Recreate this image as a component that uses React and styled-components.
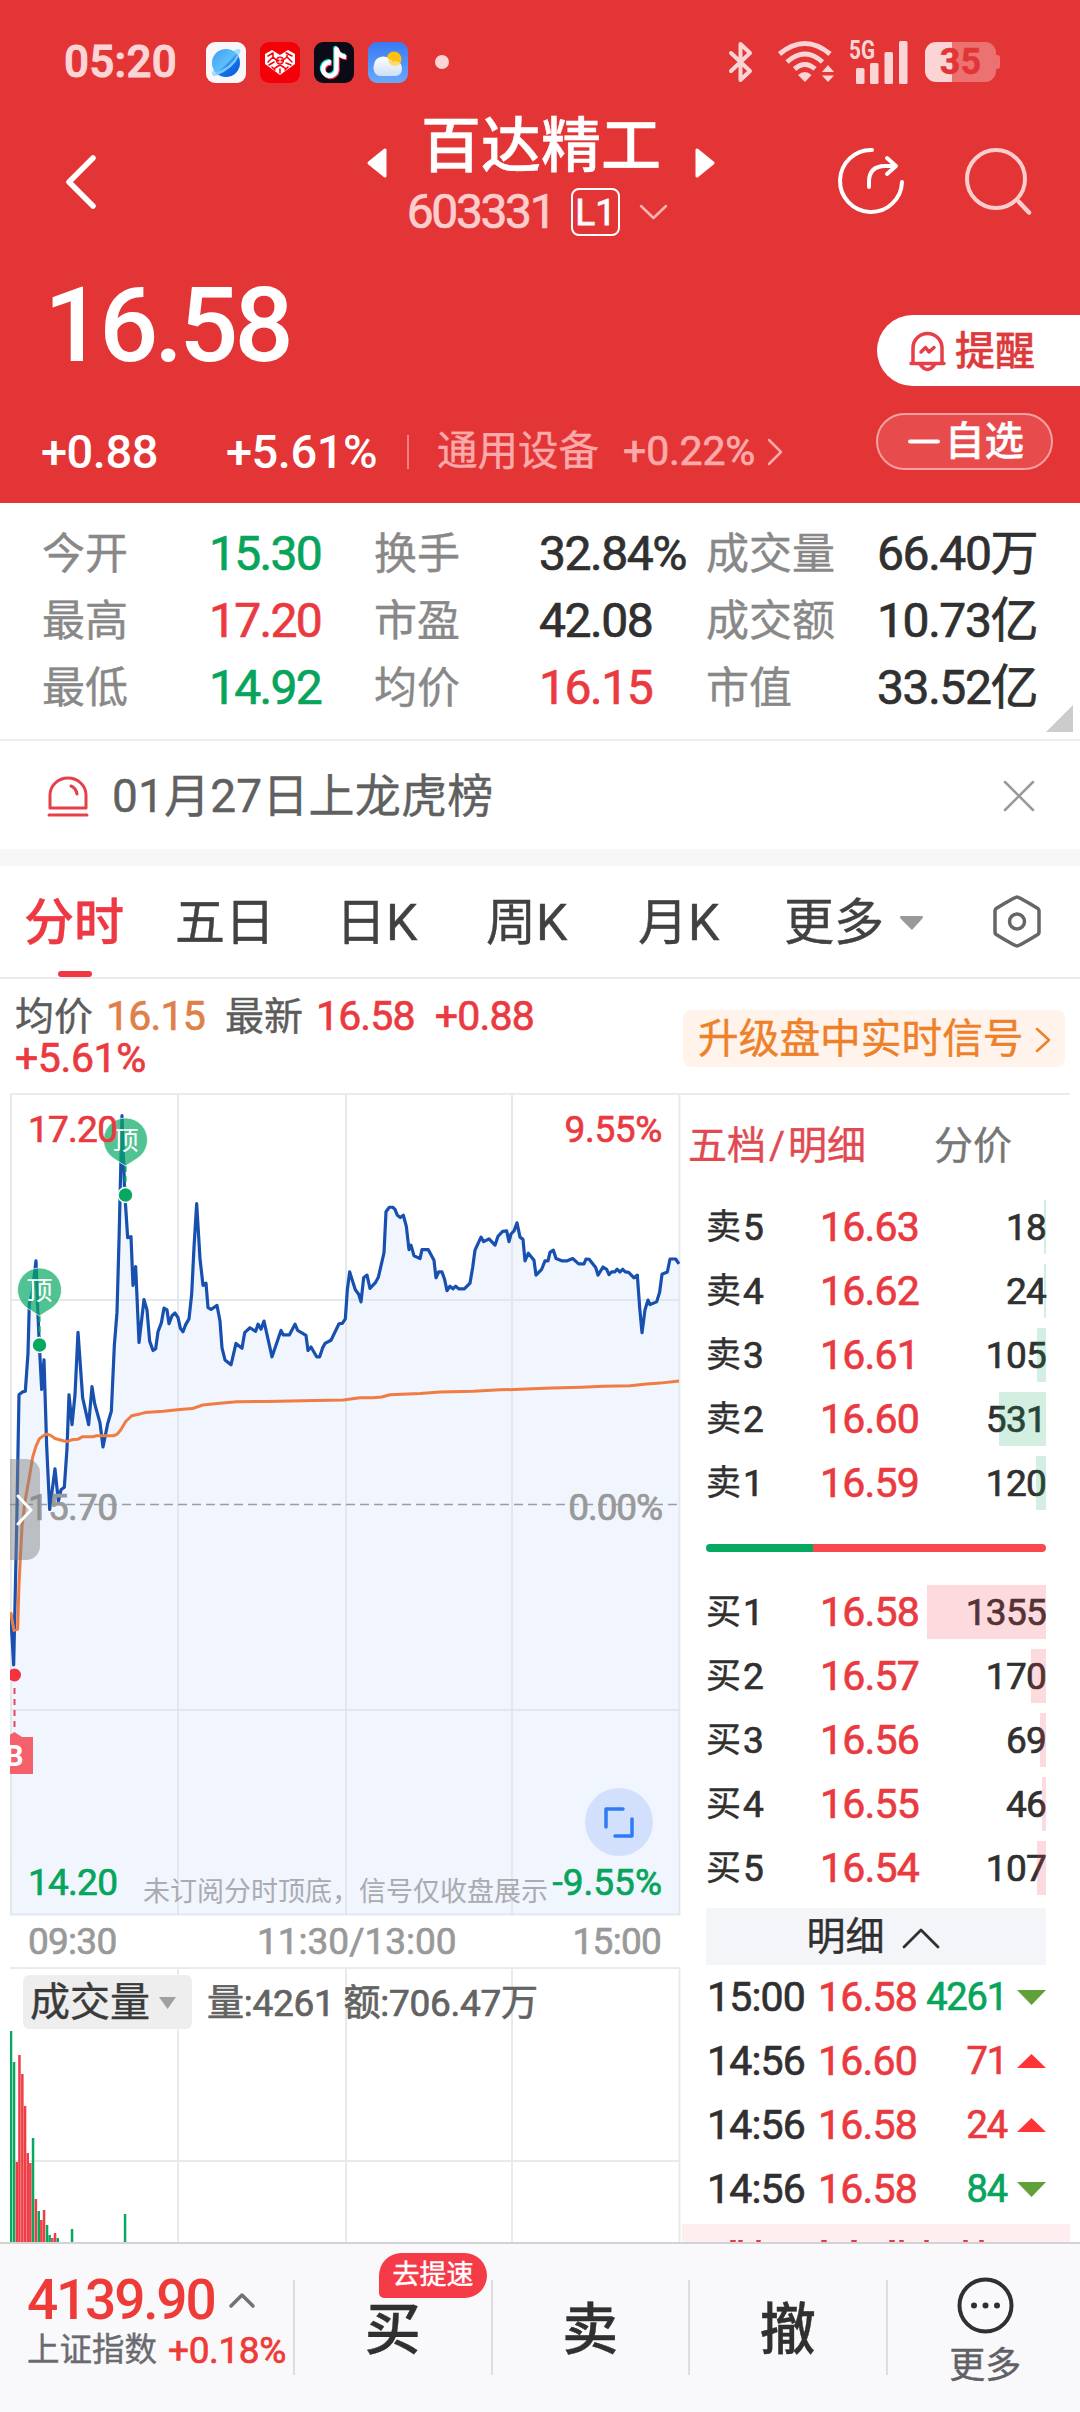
import React from 'react';
import styled, { createGlobalStyle } from 'styled-components';

const RED = '#ea3a3f';
const GREEN = '#07a45c';
const INK = '#303030';

const GlobalStyle = createGlobalStyle`
    * {
        box-sizing: border-box;
    }

    body {
        margin: 0;
        background: #fff;
    }
`;

const Screen = styled.div`
    display: flex;
    flex-direction: column;
    width: 1080px;
    height: 2412px;
    overflow: hidden;
    background: #fff;
    font-family: Roboto, 'Noto Sans CJK SC', sans-serif;
    line-height: 1;
    white-space: nowrap;
    color: ${INK};
    -webkit-text-stroke: 0.4px currentColor;
`;

const Num = styled.span`
    font-size: ${(p) => p.$size}px;
    font-weight: ${(p) => p.$weight || 400};
    color: ${(p) => p.$color || 'inherit'};
    letter-spacing: ${(p) => (p.$ls === undefined ? -0.02 : p.$ls)}em;
    -webkit-text-stroke: ${(p) => (p.$weight ? 0 : 0.7)}px currentColor;
`;

const Icon = styled.svg`
    display: block;
    flex: none;
    overflow: visible;
    fill: none;
    stroke-linecap: round;
    stroke-linejoin: round;
`;

/* ---------- header ---------- */

const Header = styled.header`
    flex: none;
    height: 503px;
    background: #e33536;
    color: #fff;
`;

const StatusBar = styled.div`
    display: flex;
    align-items: center;
    height: 104px;
    padding: 20px 80px 0 64px;
    color: #fbd5d5;
`;

const Clock = styled.span`
    width: 142px;
    font-size: 44px;
    font-weight: 500;
    letter-spacing: 0.3px;
    -webkit-text-stroke: 1px currentColor;
`;

const AppIcons = styled.div`
    display: flex;
    gap: 14px;
`;

const Dot = styled.i`
    width: 14px;
    height: 14px;
    margin-left: 27px;
    border-radius: 50%;
    background: #fbd5d5;
`;

const StatusIcons = styled.div`
    display: flex;
    align-items: center;
    margin-left: auto;
`;

const Battery = styled.div`
    position: relative;
    width: 71px;
    height: 40px;
    margin: 0 4px 0 17px;
    border-radius: 11px;
    background: linear-gradient(90deg, #fbd5d5 27px, #ec7272 27px);
    color: #e33536;
    font-size: 36px;
    font-weight: 700;
    line-height: 41px;
    text-align: center;

    &::after {
        content: '';
        position: absolute;
        right: -4px;
        top: 13px;
        width: 4px;
        height: 14px;
        border-radius: 0 3px 3px 0;
        background: #ec7272;
    }
`;

const TitleBar = styled.div`
    display: flex;
    height: 146px;
    padding: 0 48px 0 66px;
`;

const BackIcon = styled(Icon)`
    margin-top: 51px;
`;

const TitleBlock = styled.div`
    display: flex;
    flex-direction: column;
    align-items: center;
    width: 348px;
    margin-left: 270px;
`;

const TitleRow = styled.div`
    display: flex;
    align-items: center;
    justify-content: space-between;
    width: 100%;
    height: 78px;
`;

const StockName = styled.h1`
    margin: 8px 0 0;
    font-size: 60px;
    font-weight: 500;
    line-height: 78px;
`;

const TitleArrow = styled(Icon)`
    margin-top: 40px;
`;

const CodeRow = styled.div`
    display: flex;
    align-items: center;
    height: 60px;
    padding-right: 8px;
    color: #fccdcd;
`;

const LevelTag = styled.span`
    width: 49px;
    height: 48px;
    margin: 0 20px 0 17px;
    border: 2px solid #fff;
    border-radius: 8px;
    color: #fff;
    font-size: 37px;
    line-height: 45px;
    text-align: center;
    -webkit-text-stroke: 0.8px currentColor;
`;

const HeaderActions = styled.div`
    display: flex;
    gap: 62px;
    margin: 44px 0 0 auto;
`;

const PriceRow = styled.div`
    display: flex;
    justify-content: space-between;
    height: 140px;
    padding: 22px 0 0 44px;
`;

const LastPrice = styled(Num)`
    padding-top: 2px;
`;

const AlertButton = styled.div`
    display: flex;
    align-items: center;
    gap: 9px;
    width: 203px;
    height: 71px;
    margin-top: 43px;
    padding: 2px 0 0 32px;
    border-radius: 36px 0 0 36px;
    background: #fff;
    color: #dd3a3c;
    font-size: 40px;
    font-weight: 500;
`;

const ChangeRow = styled.div`
    display: flex;
    align-items: center;
    height: 121px;
    padding: 2px 27px 0 41px;
`;

const Divider = styled.i`
    width: 2px;
    height: 34px;
    margin: 0 28px 0 30px;
    background: #f07f7f;
`;

const Sector = styled.span`
    margin-right: 24px;
    color: #fba9a9;
    font-size: 40.5px;
`;

const WatchButton = styled.div`
    display: flex;
    align-items: center;
    justify-content: center;
    gap: 5px;
    width: 177px;
    height: 57px;
    margin: -21px 0 0 auto;
    padding: 1px 0 0 3px;
    border: 2px solid #f6a0a0;
    border-radius: 29px;
    background: #e84b4c;
    font-size: 39.5px;
    font-weight: 500;
`;

/* ---------- quote summary ---------- */

const Stats = styled.section`
    position: relative;
    flex: none;
    display: grid;
    grid-template-columns: 167px 165px 165px 167px 1fr auto;
    grid-auto-rows: 67px;
    align-items: center;
    height: 238px;
    padding: 17px 43px 0 42px;
    border-bottom: 2px solid #ececec;
`;

const StatLabel = styled.span`
    padding-top: 2px;
    color: #888;
    font-size: 43px;
`;

const Corner = styled.i`
    position: absolute;
    right: 7px;
    bottom: 7px;
    border-left: 27px solid transparent;
    border-bottom: 27px solid #ccc;
`;

const Notice = styled.section`
    flex: none;
    display: flex;
    align-items: center;
    height: 125px;
    padding: 2px 46px 0 48px;
    border-bottom: 17px solid #f7f7f7;
    color: #606060;
    font-size: 46px;
`;

const NoticeText = styled.span`
    margin: 0 auto 0 24px;
    letter-spacing: 0.2px;
`;

/* ---------- period tabs ---------- */

const Tabs = styled.nav`
    flex: none;
    display: grid;
    grid-template-columns: 151px 161px 150px 152px 146px 209px auto;
    align-items: center;
    justify-content: start;
    height: 113px;
    padding-left: 24px;
    border-bottom: 2px solid #ebebeb;
`;

const Tab = styled.span`
    position: relative;
    display: flex;
    align-items: center;
    gap: 16px;
    height: 111px;
    padding-top: 3px;
    color: ${(p) => (p.$active ? '#ee3843' : '#414141')};
    font-size: 50px;
    font-weight: ${(p) => (p.$active ? 500 : 400)};

    ${(p) => p.$active && `
        &::after {
            content: '';
            position: absolute;
            left: 34px;
            bottom: 0;
            width: 34px;
            height: 6px;
            border-radius: 3px;
            background: #ee3843;
        }
    `}
`;

const Legend = styled.div`
    flex: none;
    display: flex;
    justify-content: space-between;
    height: 116px;
    margin: 0 10px;
    padding: 17px 5px 0;
    border-bottom: 2px solid #ebebeb;
`;

const LegendText = styled.p`
    width: 560px;
    margin: 0;
    color: #5c5c5c;
    font-size: 39px;
    line-height: 41px;
    white-space: normal;
`;

const LegendNum = styled(Num)`
    margin: 0 20px 0 ${(p) => p.$ml || 0}px;
`;

const Promo = styled.div`
    display: flex;
    align-items: center;
    gap: 12px;
    width: 382px;
    height: 57px;
    margin-top: 14px;
    padding: 2px 0 0 15px;
    border-radius: 8px;
    background: #fff3eb;
    color: #ee8029;
    font-size: 40.7px;
`;

/* ---------- chart ---------- */

const Body = styled.main`
    display: flex;
    flex: none;
    height: 1147px;
    padding: 0 10px;
    overflow: hidden;
`;

const ChartColumn = styled.section`
    flex: none;
    width: 672px;
`;

const PriceChart = styled.div`
    position: relative;
    height: 821px;
    overflow: hidden;
`;

const ChartSvg = styled.svg`
    display: block;
    -webkit-text-stroke: 0;
`;

const ChartLabel = styled(Num)`
    position: absolute;
    top: ${(p) => p.$top}px;
    ${(p) => (p.$right ? 'right: 20px' : 'left: 18px')};
`;

const ChartHint = styled.span`
    position: absolute;
    left: 133px;
    top: 784px;
    color: #aaabb0;
    font-size: 27px;
    -webkit-text-stroke: 0;
`;

const Handle = styled.div`
    position: absolute;
    left: 0;
    top: 364px;
    display: flex;
    align-items: center;
    width: 30px;
    height: 101px;
    padding-left: 7px;
    border-radius: 0 14px 14px 0;
    background: rgba(130, 130, 130, 0.48);
`;

const FullscreenButton = styled.div`
    position: absolute;
    right: 29px;
    top: 693px;
    display: flex;
    align-items: center;
    justify-content: center;
    width: 68px;
    height: 68px;
    border-radius: 50%;
    background: #d2e0fe;
`;

const TimeAxis = styled.div`
    display: grid;
    grid-template-columns: 229px 1fr auto;
    align-items: center;
    height: 51px;
    padding: 0 21px 1px 18px;
    color: #999;
`;

const VolumeChart = styled.div`
    position: relative;
    height: 275px;
`;

const VolumeHead = styled.div`
    position: absolute;
    left: 13px;
    top: 8px;
    display: flex;
    align-items: center;
    color: #636363;
`;

const VolumePicker = styled.span`
    display: flex;
    align-items: center;
    gap: 9px;
    width: 169px;
    height: 54px;
    margin-right: 15px;
    padding: 2px 0 0 7px;
    border-radius: 6px;
    background: #eee;
    color: #3a3a3a;
    font-size: 40px;
`;

const VolumeText = styled(Num)`
    padding-top: 3px;
`;

/* ---------- order book ---------- */

const Book = styled.aside`
    flex: 1;
    display: flex;
    flex-direction: column;
    padding-right: 24px;
`;

const BookTabs = styled.div`
    flex: none;
    display: flex;
    justify-content: space-between;
    height: 100px;
    padding: 0 34px 0 6px;
    color: #777;
    font-size: 39px;
    line-height: 103px;
`;

const BookTabActive = styled.span`
    color: #e04a50;
`;

const Slash = styled.i`
    margin: 0 3px;
    font-style: normal;
`;

const Level = styled.div`
    position: relative;
    flex: none;
    display: flex;
    align-items: center;
    height: 64px;
    margin: 0 0 0 24px;
    padding-top: 1px;
    font-size: 35px;
`;

const LevelNum = styled(Num)`
    width: 55px;
    padding-left: 2px;
`;

const LevelPrice = styled(Num)`
    margin-left: 24px;
`;

const LevelQty = styled(Num)`
    margin-left: auto;
`;

const DepthBar = styled.i`
    position: absolute;
    right: 0;
    top: 5px;
    height: 54px;
    background: ${(p) => (p.$sell ? 'rgba(7, 164, 92, 0.18)' : 'rgba(240, 60, 75, 0.19)')};
`;

const Ratio = styled.div`
    flex: none;
    height: 8px;
    margin: 29px 0 28px 24px;
    border-radius: 4px;
    background: linear-gradient(90deg, #07a960 107px, #f9494d 107px);
`;

const DetailHead = styled.div`
    flex: none;
    display: flex;
    align-items: center;
    justify-content: center;
    gap: 18px;
    height: 57px;
    margin: 8px 0 0 24px;
    padding: 2px 7px 0 0;
    background: #f4f5f9;
    font-size: 39px;
`;

const Trade = styled.div`
    flex: none;
    display: grid;
    grid-template-columns: 111px 99px 1fr 29px;
    align-items: center;
    height: 64px;
    padding-left: 25px;
`;

const TradeQty = styled(Num)`
    margin-right: 10px;
    text-align: right;
`;

const Strip = styled.div`
    flex: none;
    height: 60px;
    margin: 3px -24px 0 0;
    background: #feeeef;
`;

/* ---------- bottom bar ---------- */

const BottomBar = styled.footer`
    flex: none;
    display: flex;
    height: 170px;
    border-top: 2px solid #d3d3d6;
    background: #f9f9fb;
`;

const Index = styled.div`
    flex: none;
    width: 293px;
    padding: 28px 0 0 27px;
`;

const IndexValue = styled.div`
    display: flex;
    align-items: center;
    gap: 15px;
    height: 56px;
    color: #ee3b38;
`;

const IndexName = styled.div`
    display: flex;
    align-items: center;
    gap: 11px;
    height: 44px;
    color: #6a6b70;
    font-size: 32.5px;
`;

const Action = styled.div`
    position: relative;
    flex: none;
    display: flex;
    flex-direction: column;
    align-items: center;
    justify-content: center;
    gap: ${(p) => (p.$more ? 14 : 0)}px;
    width: 197.5px;
    height: 95px;
    margin-top: 36px;
    padding-top: ${(p) => (p.$more ? 5 : 4)}px;
    border-left: 2px solid #dedee2;
    font-size: 56px;
    font-weight: 500;
`;

const Badge = styled.span`
    position: absolute;
    left: 84px;
    top: -27px;
    width: 108px;
    height: 45px;
    border-radius: 23px 23px 23px 5px;
    background: #f53a48;
    color: #fff;
    font-size: 27px;
    font-weight: 400;
    line-height: 45px;
    text-align: center;
`;

const MoreLabel = styled.span`
    color: #606065;
    font-size: 36px;
    font-weight: 400;
`;

const stats = [
    ['今开', '15.30', GREEN, '换手', '32.84%', INK, '成交量', '66.40万'],
    ['最高', '17.20', RED, '市盈', '42.08', INK, '成交额', '10.73亿'],
    ['最低', '14.92', GREEN, '均价', '16.15', RED, '市值', '33.52亿'],
];

const sells = [
    [5, '16.63', 18, 2],
    [4, '16.62', 24, 2],
    [3, '16.61', 105, 9],
    [2, '16.60', 531, 47],
    [1, '16.59', 120, 10],
];

const buys = [
    [1, '16.58', 1355, 119],
    [2, '16.57', 170, 15],
    [3, '16.56', 69, 6],
    [4, '16.55', 46, 4],
    [5, '16.54', 107, 9],
];

const trades = [
    ['15:00', '16.58', 4261, false],
    ['14:56', '16.60', 71, true],
    ['14:56', '16.58', 24, true],
    ['14:56', '16.58', 84, false],
];

// x, height, rising
const volumes = [
    [1, 211, 0], [4, 180, 0], [6.8, 80, 1], [9.4, 187, 1], [12.3, 168, 1], [15, 136, 1], [17.7, 89, 1],
    [20.3, 79, 1], [23, 104, 0], [25.8, 43, 1], [28.7, 31, 0], [31.3, 22, 1], [34, 32, 1], [37, 17, 0],
    [39.6, 7, 0], [42.3, 4, 1], [45, 9, 1], [47.7, 4, 0], [62, 13, 0], [115, 28, 0],
];

const priceLine = `32,1195 41,1310 50,1000 57,705 67,699 76,697 84,612 88,500 96,480 108,405 113,510 118,593 125,693 132,627
140,820 149,962 165,871 175,944 183,918 193,912 201,825 207,705 216,772 225,705 234,565 248,712 266,772 276,687 284,725
300,768 309,822 323,770 334,742 343,595 351,520 357,360 366,80 374,250 383,353 393,351 399,460 407,418 417,588 432,492
441,515 449,585 459,606 467,602 474,564 484,544 492,511 501,515 507,546 516,528 525,522 534,532 541,556 549,564 557,548
567,535 575,480 582,375 590,277 600,400 609,460 618,455 624,510 633,514 651,505 660,540 666,600 675,627 693,638 708,590
726,601 734,566 750,555 767,563 774,547 783,558 792,540 816,620 843,561 850,571 868,571 885,547 893,561 918,572 924,606
933,598 950,620 959,620 968,600 975,590 993,583 1017,546 1027,545 1036,535 1042,470 1049,430 1066,470 1076,480 1083,497
1091,443 1101,437 1110,467 1126,454 1135,442 1152,387 1158,295 1168,285 1178,285 1185,290 1192,303 1201,308 1210,303
1219,328 1227,380 1233,370 1242,394 1260,400 1266,380 1285,380 1302,404 1308,443 1316,430 1326,430 1334,447 1341,472
1350,462 1359,468 1367,462 1377,468 1393,468 1410,455 1418,420 1425,381 1443,352 1451,362 1467,356 1485,370 1494,350
1508,339 1520,338 1527,362 1533,345 1542,338 1551,320 1560,352 1569,357 1575,405 1585,388 1602,404 1608,437 1625,424
1635,405 1644,405 1650,386 1660,381 1668,400 1685,405 1702,405 1718,400 1736,412 1752,412 1758,401 1768,402 1787,420
1794,437 1809,419 1820,424 1827,436 1835,430 1844,430 1851,424 1860,430 1868,424 1876,430 1886,431 1902,443 1912,437
1919,510 1926,566 1935,515 1944,493 1950,503 1970,497 1979,475 1986,435 2002,430 2010,401 2027,401 2037,412`;

const avgLine = `32,1192 42,1233 53,1230 57,1130 66,1000 76,940 88,890 98,845 108,820 118,804 130,797 140,793 152,796 165,803
190,808 201,810 215,806 233,805 248,799 278,799 290,797 340,797 352,793 362,784 377,765 395,752 420,748 435,745 490,742
540,738 577,736 608,728 660,724 710,721 800,720 945,718 1030,717 1080,712 1120,712 1145,710 1170,705 1260,702 1320,699
1420,697 1500,694 1560,693 1655,690 1745,688 1810,686 1890,685 1940,681 1980,679 2037,674`;

const AppIconSet = () => (
    <AppIcons>
        <Icon width="40" height="41" viewBox="0 0 40 41">
            <defs>
                <linearGradient id="planet" x1="0" y1="0" x2="1" y2="1">
                    <stop offset="0" stopColor="#3f9bf5" />
                    <stop offset=".5" stopColor="#5cc0fb" />
                    <stop offset=".6" stopColor="#1673ea" />
                    <stop offset="1" stopColor="#0a55d8" />
                </linearGradient>
            </defs>
            <rect width="40" height="41" rx="9" fill="#f8f8fa" />
            <path d="M29 8Q36 5 34 11L30 16L12 33Q5 36 6 30L8 27Z" fill="#a5dcfd" />
            <circle cx="20" cy="21" r="14" fill="url(#planet)" />
            <path d="M33 14Q27 27 11 33L9 31Q24 26 32 12Z" fill="#7cc9fc" />
        </Icon>
        <Icon width="40" height="41" viewBox="0 0 40 41">
            <rect width="40" height="41" rx="9" fill="#f40008" />
            <path d="M5 15V22L20 33L35 22V12L28 8L20 13L12 8L5 12Z" fill="#fff" />
            <path d="M8 14L13 11M8 20L13 15L18 20M9 23L14 20M26 11L32 14M22 19L27 15L32 20M26 21L31 23M15 26L20 23L25 26M20 27V31M12 25L15 28M28 25L25 28M13 11V15M27 11V15" stroke="#f40008" strokeWidth="1.5" />
            <circle cx="20" cy="18.500" r="4" fill="#f40008" />
            <path d="M18 17H22M18 20H22M20 16V21" stroke="#fff" strokeWidth="1" />
        </Icon>
        <Icon width="40" height="41" viewBox="0 0 40 41">
            <rect width="40" height="41" rx="9" fill="#0b0b17" />
            <g strokeWidth="4.500" strokeLinecap="butt">
                <path d="M16 19.500A6.800 6.800 0 1 0 21.500 27V6Q23 13 31 14" stroke="#25e8e2" />
                <path d="M18 21.500A6.800 6.800 0 1 0 23.500 29V8Q25 15 33 16" stroke="#f8305a" />
                <path d="M17 20.500A6.800 6.800 0 1 0 22.500 28V7Q24 14 32 15" stroke="#fff" />
            </g>
        </Icon>
        <Icon width="40" height="41" viewBox="0 0 40 41">
            <defs>
                <linearGradient id="sky" x1="0" y1="0" x2="0" y2="1">
                    <stop offset="0" stopColor="#3a7af2" />
                    <stop offset="1" stopColor="#69a9fa" />
                </linearGradient>
                <linearGradient id="cloud" x1="0" y1="0" x2="0" y2="1">
                    <stop offset="0" stopColor="#fff" />
                    <stop offset="1" stopColor="#cfdef5" />
                </linearGradient>
            </defs>
            <rect width="40" height="41" rx="9" fill="url(#sky)" />
            <circle cx="26" cy="17" r="7.500" fill="#fdc010" />
            <path d="M12 34A7 8 0 0 1 6 23A9 9 0 0 1 21 17Q24 19 25 20Q33 18 34 26Q34 34 27 34Z" fill="url(#cloud)" />
            <path d="M20 17Q21 25 28 24Q33 23 32 21Q29 19 25 20Q23 17 20 17Z" fill="#fbdc74" />
        </Icon>
    </AppIcons>
);

const Status = () => (
    <StatusBar>
        <Clock>05:20</Clock>
        <AppIconSet />
        <Dot />
        <StatusIcons>
            <Icon width="23" height="42" viewBox="0 0 23 42" stroke="#fbd5d5" strokeWidth="4">
                <path d="M2 12L21 30L11.500 39V3L21 12L2 30" />
            </Icon>
            <Icon width="57" height="42" viewBox="0 0 57 42" stroke="#fbd5d5" strokeWidth="5" style={{ marginLeft: 25 }}>
                <path d="M2.500 13Q28 -8 53 13M10 21Q28 5 45.500 21M17.500 28Q28 19 38 28" strokeLinecap="butt" />
                <path d="M21 34Q28 28 34.500 34L28 41Z" fill="#fbd5d5" stroke="none" />
                <path d="M51 24L57 31H45ZM51 41L57 34.500H45Z" fill="#fbd5d5" stroke="none" />
            </Icon>
            <Icon width="58" height="43" viewBox="0 0 58 43" style={{ marginLeft: 16 }}>
                <text x="-1" y="18" fill="#fbd5d5" fontSize="25" fontWeight="700" textLength="26" lengthAdjust="spacingAndGlyphs">5G</text>
                <rect x="6" y="27" width="8.500" height="16" rx="1.500" fill="#fbd5d5" />
                <rect x="20" y="22" width="8.500" height="21" rx="1.500" fill="#fbd5d5" />
                <rect x="34.500" y="11" width="8.500" height="32" rx="1.500" fill="#fbd5d5" />
                <rect x="49" y="0" width="8.500" height="43" rx="1.500" fill="#fbd5d5" />
            </Icon>
            <Battery>35</Battery>
        </StatusIcons>
    </StatusBar>
);

const Title = () => (
    <TitleBar>
        <BackIcon width="31" height="54" viewBox="0 0 31 54" stroke="#fff" strokeWidth="5.500">
            <path d="M27 3L3 27L27 51" />
        </BackIcon>
        <TitleBlock>
            <TitleRow>
                <TitleArrow width="20" height="30" viewBox="0 0 20 30" stroke="#fff" strokeWidth="3">
                    <path d="M18 2V28L2 15Z" fill="#fff" />
                </TitleArrow>
                <StockName>百达精工</StockName>
                <TitleArrow width="20" height="30" viewBox="0 0 20 30" stroke="#fff" strokeWidth="3">
                    <path d="M2 2V28L18 15Z" fill="#fff" />
                </TitleArrow>
            </TitleRow>
            <CodeRow>
                <Num $size={48} $ls={-0.05}>603331</Num>
                <LevelTag>L1</LevelTag>
                <Icon width="27" height="14" viewBox="0 0 27 14" stroke="#f9b4b4" strokeWidth="2.500">
                    <path d="M1 1L13.500 13L26 1" />
                </Icon>
            </CodeRow>
        </TitleBlock>
        <HeaderActions>
            <Icon width="66" height="66" viewBox="0 0 66 66" stroke="#fff" strokeWidth="4">
                <path d="M34 2A31 31 0 1 0 64 34" />
                <path d="M31 39V34Q31 18 47 18H57M49 10L58 18L49 26" />
            </Icon>
            <Icon width="66" height="67" viewBox="0 0 66 67" stroke="#fccdcd" strokeWidth="4">
                <circle cx="30" cy="31" r="29" />
                <path d="M53 54L63 64.500" strokeWidth="4.500" />
            </Icon>
        </HeaderActions>
    </TitleBar>
);

const Price = () => (
    <>
        <PriceRow>
            <LastPrice $size={104} $weight={500} $ls={-0.038}>16.58</LastPrice>
            <AlertButton>
                <Icon width="37" height="39" viewBox="0 0 37 39" stroke="#e5404a" strokeWidth="3.500">
                    <path d="M4 30V16A14.500 14.500 0 0 1 33 16V30M2 31.500H35M11 32Q18.500 43 26 32" />
                    <path d="M12 20L16.500 15.500L20 20L25 15.500" />
                </Icon>
                提醒
            </AlertButton>
        </PriceRow>
        <ChangeRow>
            <Num $size={47} $weight={500} $ls={-0.01} style={{ width: 185 }}>+0.88</Num>
            <Num $size={47} $weight={500} $ls={-0.01}>+5.61%</Num>
            <Divider />
            <Sector>通用设备</Sector>
            <Num $size={41} $ls={-0.005} $color="#fba9a9">+0.22%</Num>
            <Icon width="14" height="26" viewBox="0 0 14 26" stroke="#fba9a9" strokeWidth="2.500" style={{ marginLeft: 13 }}>
                <path d="M1 1L13 13L1 25" />
            </Icon>
            <WatchButton>
                <Icon width="32" height="5" viewBox="0 0 32 5" stroke="#fff" strokeWidth="4">
                    <path d="M2 2.500H30" />
                </Icon>
                自选
            </WatchButton>
        </ChangeRow>
    </>
);

const Summary = () => (
    <Stats>
        {stats.map(([l1, v1, c1, l2, v2, c2, l3, v3]) => (
            <React.Fragment key={l1}>
                <StatLabel>{l1}</StatLabel>
                <Num $size={48} $color={c1} $ls={-0.035}>{v1}</Num>
                <StatLabel>{l2}</StatLabel>
                <Num $size={48} $color={c2} $ls={-0.03}>{v2}</Num>
                <StatLabel>{l3}</StatLabel>
                <Num $size={48} $ls={-0.03}>{v3}</Num>
            </React.Fragment>
        ))}
        <Corner />
    </Stats>
);

const Pin = ({ x, y }) => (
    <g>
        <path d={`M${x} ${y + 26}V${y + 50}`} stroke={GREEN} strokeWidth="2" strokeDasharray="6 4" />
        <path
            d={`M${x} ${y + 26}L${x - 11} ${y + 19}A22 22 0 1 1 ${x + 11} ${y + 19}Z`}
            fill="rgba(7, 170, 100, 0.7)"
            stroke="#fff"
            strokeOpacity=".7"
        />
        <text x={x} y={y + 10} fill="#fff" fontSize="26" textAnchor="middle">顶</text>
        <circle cx={x} cy={y + 55} r="7.500" fill="#07a960" stroke="#fff" strokeWidth="1.500" />
    </g>
);

const Intraday = () => (
    <PriceChart>
        <ChartSvg width="672" height="821">
            <svg width="670" height="819" viewBox="30 33.6 2010 1834.6" preserveAspectRatio="none">
                <polygon points={`30,1870 ${priceLine} 2040,1870`} fill="#f0f5fe" />
            </svg>
            <g stroke="#dfe3ea" strokeOpacity=".8" strokeWidth="2">
                <path d="M1 0V820M168 0V820M336 0V820M502 0V820M669.500 0V820" />
                <path d="M0 205H670M0 615H670M0 819.500H670" />
            </g>
            <path d="M0 409.500H670" stroke="#9b9da3" strokeWidth="1.500" strokeDasharray="9 5" />
            <svg width="670" height="819" viewBox="30 33.6 2010 1834.6" preserveAspectRatio="none" fill="none" strokeLinejoin="round">
                <polyline points={priceLine} stroke="#1850b0" strokeWidth="3.200" vectorEffect="non-scaling-stroke" />
                <polyline points={avgLine} stroke="#f07c42" strokeWidth="3" vectorEffect="non-scaling-stroke" />
            </svg>
            <Pin x={29.5} y={195} />
            <Pin x={115.5} y={45} />
            <circle cx="4.500" cy="580" r="6.500" fill="#f5333f" />
            <path d="M4.500 593V637" stroke="#e8465a" strokeWidth="2" strokeDasharray="6 5" />
            <path d="M-4 642L4.500 637L12 642H23V679H-4Z" fill="#f4606c" />
            <text x="-5" y="671" fill="#fff" fontSize="29" fontWeight="700">B</text>
        </ChartSvg>
        <ChartLabel $size={37} $top={16} $color={RED}>17.20</ChartLabel>
        <ChartLabel $size={37} $top={16} $color={RED} $ls={-0.01} $right>9.55%</ChartLabel>
        <ChartLabel $size={37} $top={394} $color="#999">15.70</ChartLabel>
        <ChartLabel $size={37} $top={394} $color="#999" $ls={-0.03} $right>0.00%</ChartLabel>
        <ChartLabel $size={37} $top={769} $color={GREEN}>14.20</ChartLabel>
        <ChartLabel $size={37} $top={769} $color={GREEN} $ls={0} $right>-9.55%</ChartLabel>
        <ChartHint>未订阅分时顶底，信号仅收盘展示</ChartHint>
        <Handle>
            <Icon width="16" height="30" viewBox="0 0 16 30" stroke="#fff" strokeWidth="3">
                <path d="M1 1L14 15L1 29" />
            </Icon>
        </Handle>
        <FullscreenButton>
            <Icon width="30" height="31" viewBox="0 0 30 31" stroke="#2f7bf2" strokeWidth="3.500">
                <path d="M19 2H2V20M28 12V29H11" />
            </Icon>
        </FullscreenButton>
    </PriceChart>
);

const Volume = () => (
    <VolumeChart>
        <ChartSvg width="672" height="275">
            <g stroke="#eaeaea" strokeWidth="2">
                <path d="M0 1H670M0 194H670" />
                <path d="M168 2V276M336 2V276M502 2V276M669.500 2V276" />
            </g>
            {volumes.map(([x, h, up]) => (
                <rect key={x} x={x - 1.2} y={275 - h} width="2.500" height={h} fill={up ? '#ee3d45' : '#07a960'} />
            ))}
        </ChartSvg>
        <VolumeHead>
            <VolumePicker>
                成交量
                <Icon width="17" height="12" viewBox="0 0 17 12">
                    <path d="M0 0H17L8.500 12Z" fill="#a0a0a0" />
                </Icon>
            </VolumePicker>
            <VolumeText $size={37} $ls={-0.007}>量:4261 额:706.47万</VolumeText>
        </VolumeHead>
    </VolumeChart>
);

const LevelRow = ({ side, data: [n, price, qty, bar] }) => (
    <Level>
        {side}
        <LevelNum $size={37}>{n}</LevelNum>
        <LevelPrice $size={41} $color={RED}>{price}</LevelPrice>
        <LevelQty $size={37}>{qty}</LevelQty>
        <DepthBar $sell={side === '卖'} style={{ width: bar }} />
    </Level>
);

const OrderBook = () => (
    <Book>
        <BookTabs>
            <BookTabActive>五档<Slash>/</Slash>明细</BookTabActive>
            <span>分价</span>
        </BookTabs>
        {sells.map((s) => <LevelRow key={s[0]} side="卖" data={s} />)}
        <Ratio />
        {buys.map((b) => <LevelRow key={b[0]} side="买" data={b} />)}
        <DetailHead>
            明细
            <Icon width="36" height="20" viewBox="0 0 36 20" stroke={INK} strokeWidth="2.800">
                <path d="M1 19L18 2L35 19" />
            </Icon>
        </DetailHead>
        {trades.map(([time, price, qty, up], i) => (
            <Trade key={i}>
                <Num $size={41}>{time}</Num>
                <Num $size={41} $color={RED}>{price}</Num>
                <TradeQty $size={38} $ls={-0.03} $color={up ? RED : GREEN}>{qty}</TradeQty>
                <Icon width="29" height="15" viewBox="0 0 29 15">
                    {up ? <path d="M14.500 0L29 14H0Z" fill="#ff3535" /> : <path d="M0 0H29L14.500 15Z" fill="#60a03b" />}
                </Icon>
            </Trade>
        ))}
        <Strip>
            <Icon width="388" height="18" viewBox="0 0 388 18" stroke="#d9404c" strokeWidth="2" strokeLinecap="butt">
                <path d="M49 17H53M57 17H60M75 17H78M140 17H144M170 17H174M208 17H212M218 17H221M243 17H246M282 17H285M298 17H301" />
            </Icon>
        </Strip>
    </Book>
);

const Footer = () => (
    <BottomBar>
        <Index>
            <IndexValue>
                <Num $size={55} $weight={500} $ls={-0.04}>4139.90</Num>
                <Icon width="26" height="14" viewBox="0 0 26 14" stroke="#707075" strokeWidth="3.500">
                    <path d="M2 13L13 2L24 13" />
                </Icon>
            </IndexValue>
            <IndexName>
                上证指数
                <Num $size={37} $ls={-0.01} $color="#ee3b38">+0.18%</Num>
            </IndexName>
        </Index>
        <Action>
            买
            <Badge>去提速</Badge>
        </Action>
        <Action>卖</Action>
        <Action>撤</Action>
        <Action $more>
            <Icon width="57" height="57" viewBox="0 0 57 57" stroke={INK} strokeWidth="4">
                <circle cx="28.500" cy="28.500" r="26" />
                <g fill={INK} stroke="none">
                    <circle cx="17" cy="28.500" r="3" />
                    <circle cx="28.500" cy="28.500" r="3" />
                    <circle cx="40" cy="28.500" r="3" />
                </g>
            </Icon>
            <MoreLabel>更多</MoreLabel>
        </Action>
    </BottomBar>
);

const App = () => {
    return (
        <Screen>
            <GlobalStyle />
            <Header>
                <Status />
                <Title />
                <Price />
            </Header>

            <Summary />

            <Notice>
                <Icon width="40" height="41" viewBox="0 0 40 41" stroke="#e5404a" strokeWidth="3">
                    <path d="M2 32V19A18 17 0 0 1 38 19V32ZM1 39H39M23 10Q28 12 29 18" />
                </Icon>
                <NoticeText>01月27日上龙虎榜</NoticeText>
                <Icon width="30" height="30" viewBox="0 0 30 30" stroke="#999" strokeWidth="2.500">
                    <path d="M1 1L29 29M29 1L1 29" />
                </Icon>
            </Notice>

            <Tabs>
                <Tab $active>分时</Tab>
                <Tab>五日</Tab>
                <Tab>日K</Tab>
                <Tab>周K</Tab>
                <Tab>月K</Tab>
                <Tab>
                    更多
                    <Icon width="23" height="14" viewBox="0 0 23 14">
                        <path d="M1 0H22Q24 1 22 3L12 14L1 3Q-1 1 1 0Z" fill="#999" />
                    </Icon>
                </Tab>
                <Icon width="48" height="53" viewBox="0 0 48 53" stroke="#666" strokeWidth="3.500">
                    <path d="M24 2Q26 2 44 13Q46 14 46 16V37Q46 39 44 40Q26 51 24 51Q22 51 4 40Q2 39 2 37V16Q2 14 4 13Q22 2 24 2Z" />
                    <circle cx="24" cy="26.500" r="7.500" />
                </Icon>
            </Tabs>

            <Legend>
                <LegendText>
                    均价
                    <LegendNum $size={41} $color="#df8048" $ml={13}>16.15</LegendNum>
                    最新
                    <LegendNum $size={41} $color={RED} $ml={13}>16.58</LegendNum>
                    <Num $size={41} $color={RED}>+0.88</Num>
                    <br />
                    <Num $size={41} $ls={-0.01} $color={RED}>+5.61%</Num>
                </LegendText>
                <Promo>
                    升级盘中实时信号
                    <Icon width="14" height="24" viewBox="0 0 14 24" stroke="#ee8029" strokeWidth="2.500">
                        <path d="M1 1L13 12L1 23" />
                    </Icon>
                </Promo>
            </Legend>

            <Body>
                <ChartColumn>
                    <Intraday />
                    <TimeAxis>
                        <Num $size={37}>09:30</Num>
                        <Num $size={37} $ls={0}>11:30/13:00</Num>
                        <Num $size={37}>15:00</Num>
                    </TimeAxis>
                    <Volume />
                </ChartColumn>
                <OrderBook />
            </Body>

            <Footer />
        </Screen>
    );
};

export default App;
